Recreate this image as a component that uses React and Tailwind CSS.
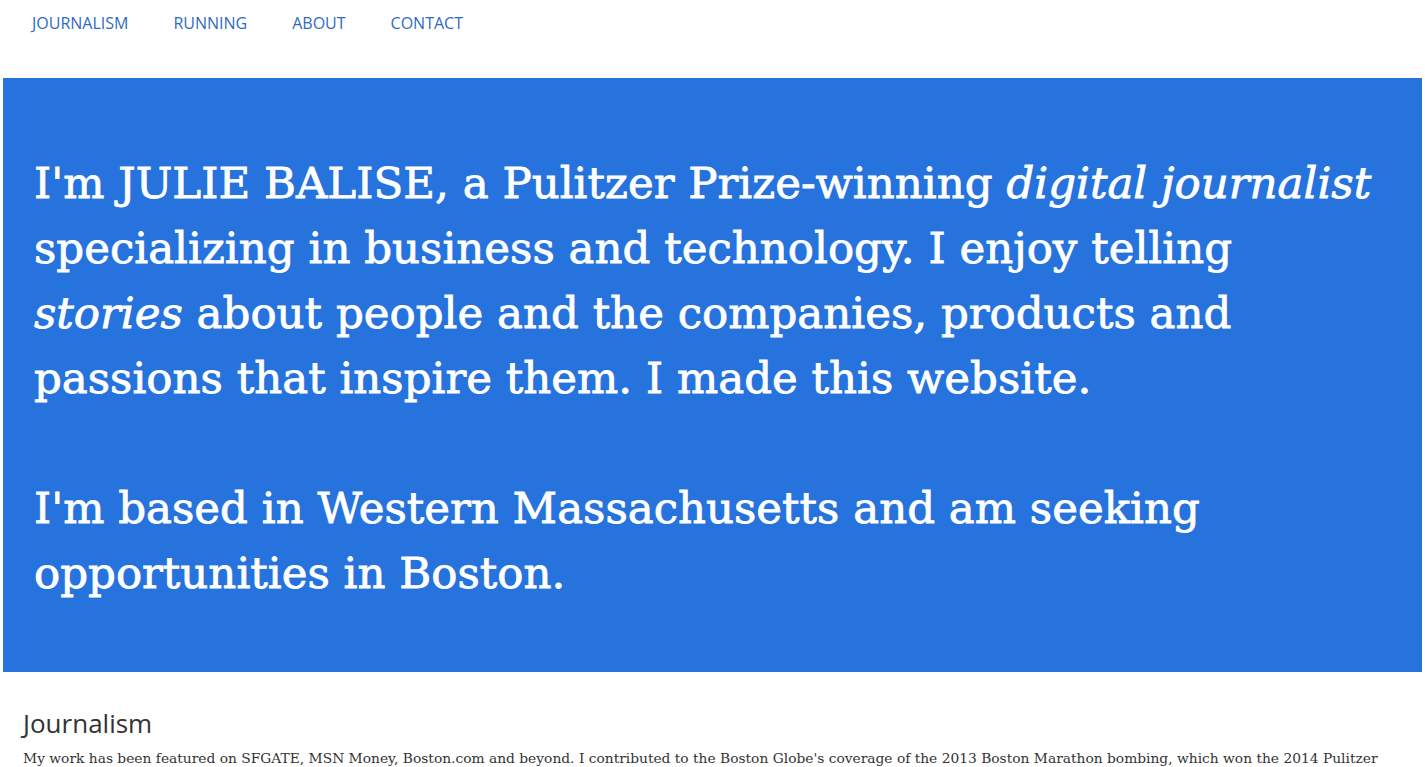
export default function App() {
  return (
    <div className="min-h-screen bg-white" style={{ fontFamily: '"Open Sans", sans-serif' }}>
      <nav className="flex h-[46px] items-center gap-[45px] pl-[32px] text-[16px] text-[#2f6bc3]">
        <a>JOURNALISM</a>
        <a>RUNNING</a>
        <a>ABOUT</a>
        <a>CONTACT</a>
      </nav>
      <div className="mx-[3px] mt-[32px] h-[594px] bg-[#2673de] pl-[31px] pr-[30px] pt-[73px]">
        <p className="text-[43.5px] leading-[65px] text-white [-webkit-text-stroke:0.8px_white]" style={{ fontFamily: '"DejaVu Serif", serif' }}>
          I'm JULIE BALISE, a Pulitzer Prize-winning <em>digital journalist</em> specializing in business and technology. I enjoy telling <em>stories</em> about people and the companies, products and passions that inspire them. I made this website.
          <br />
          <br />
          I'm based in Western Massachusetts and am seeking opportunities in Boston.
        </p>
      </div>
      <section className="px-[23px] pt-[36px] text-[#333]">
        <h2 className="text-[26px] leading-[30px]">Journalism</h2>
        <p className="mt-[9px] text-[13.8px] leading-[22px]" style={{ fontFamily: '"DejaVu Serif", serif' }}>
          My work has been featured on SFGATE, MSN Money, Boston.com and beyond. I contributed to the Boston Globe's coverage of the 2013 Boston Marathon bombing, which won the 2014 Pulitzer Prize for Breaking News Reporting.
        </p>
      </section>
    </div>
  );
}
